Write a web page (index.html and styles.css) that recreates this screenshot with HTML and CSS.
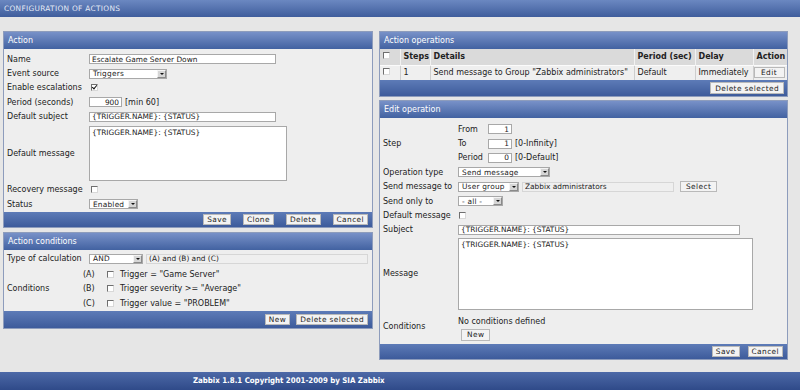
FILE: index.html
```html
<!DOCTYPE html>
<html lang="en">
<head>
    <meta charset="UTF-8">
    <title>Configuration of actions</title>
    <link rel="stylesheet" href="styles.css">
</head>
<body>
    <div class="title-bar">CONFIGURATION OF ACTIONS</div>

    <div class="main">
        <!-- Left column -->
        <div class="col-left">
            <div class="panel">
                <div class="panel-head">Action</div>
                <div class="form form-left">
                    <div class="row"><span class="lbl">Name</span><input class="inp w-name" value="Escalate Game Server Down"></div>
                    <div class="row"><span class="lbl">Event source</span><span class="sel w-event">Triggers<i class="arr"></i></span></div>
                    <div class="row"><span class="lbl">Enable escalations</span><span class="cb checked"></span></div>
                    <div class="row"><span class="lbl">Period (seconds)</span><input class="inp num w-period" value="900"><span class="hint">[min 60]</span></div>
                    <div class="row"><span class="lbl">Default subject</span><input class="inp w-name" value="{TRIGGER.NAME}: {STATUS}"></div>
                    <div class="row tall"><span class="lbl">Default message</span><textarea class="txt w-msg">{TRIGGER.NAME}: {STATUS}</textarea></div>
                    <div class="row"><span class="lbl">Recovery message</span><span class="cb"></span></div>
                    <div class="row"><span class="lbl">Status</span><span class="sel w-status">Enabled<i class="arr"></i></span></div>
                </div>
                <div class="panel-foot">
                    <button class="btn">Save</button>
                    <button class="btn">Clone</button>
                    <button class="btn">Delete</button>
                    <button class="btn">Cancel</button>
                </div>
            </div>

            <div class="panel">
                <div class="panel-head">Action conditions</div>
                <div class="form form-left form-conds">
                    <div class="row calc"><span class="lbl">Type of calculation</span><span class="sel w-calc">AND<i class="arr"></i></span><input class="inp ro w-formula" value="(A) and (B) and (C)" readonly></div>
                    <div class="row conds">
                        <span class="lbl">Conditions</span>
                        <div class="cond-list">
                            <div class="cond"><span class="key">(A)</span><span class="cb"></span><span class="cond-text">Trigger = "Game Server"</span></div>
                            <div class="cond"><span class="key">(B)</span><span class="cb"></span><span class="cond-text">Trigger severity &gt;= "Average"</span></div>
                            <div class="cond"><span class="key">(C)</span><span class="cb"></span><span class="cond-text">Trigger value = "PROBLEM"</span></div>
                        </div>
                    </div>
                </div>
                <div class="panel-foot foot-tight">
                    <button class="btn">New</button>
                    <button class="btn">Delete selected</button>
                </div>
            </div>
        </div>

        <!-- Right column -->
        <div class="col-right">
            <div class="panel">
                <div class="panel-head">Action operations</div>
                <table class="ops">
                    <colgroup>
                        <col style="width:20px"><col style="width:30px"><col style="width:204px"><col style="width:61px"><col style="width:58px"><col style="width:34px">
                    </colgroup>
                    <thead>
                        <tr>
                            <th><span class="cb"></span></th>
                            <th>Steps</th>
                            <th>Details</th>
                            <th>Period (sec)</th>
                            <th>Delay</th>
                            <th>Action</th>
                        </tr>
                    </thead>
                    <tbody>
                        <tr>
                            <td><span class="cb"></span></td>
                            <td>1</td>
                            <td>Send message to Group "Zabbix administrators"</td>
                            <td>Default</td>
                            <td>Immediately</td>
                            <td><button class="btn btn-edit">Edit</button></td>
                        </tr>
                    </tbody>
                </table>
                <div class="panel-foot foot-ops">
                    <button class="btn">Delete selected</button>
                </div>
            </div>

            <div class="panel">
                <div class="panel-head">Edit operation</div>
                <div class="form form-right">
                    <div class="row step">
                        <span class="lbl">Step</span>
                        <div class="step-list">
                            <div class="step-row"><span class="sub">From</span><input class="inp num w-step" value="1"></div>
                            <div class="step-row"><span class="sub">To</span><input class="inp num w-step" value="1"><span class="hint">[0-Infinity]</span></div>
                            <div class="step-row"><span class="sub">Period</span><input class="inp num w-step" value="0"><span class="hint">[0-Default]</span></div>
                        </div>
                    </div>
                    <div class="row"><span class="lbl">Operation type</span><span class="sel w-optype">Send message<i class="arr"></i></span></div>
                    <div class="row"><span class="lbl">Send message to</span><span class="sel w-sendto">User group<i class="arr"></i></span><input class="inp ro w-group" value="Zabbix administrators" readonly><button class="btn btn-select">Select</button></div>
                    <div class="row"><span class="lbl">Send only to</span><span class="sel w-only">- all -<i class="arr"></i></span></div>
                    <div class="row"><span class="lbl">Default message</span><span class="cb"></span></div>
                    <div class="row"><span class="lbl">Subject</span><input class="inp w-subject" value="{TRIGGER.NAME}: {STATUS}"></div>
                    <div class="row tall-msg"><span class="lbl">Message</span><textarea class="txt w-message">{TRIGGER.NAME}: {STATUS}</textarea></div>
                    <div class="row op-conds">
                        <span class="lbl">Conditions</span>
                        <div class="op-cond-box">
                            <span>No conditions defined</span>
                            <button class="btn">New</button>
                        </div>
                    </div>
                </div>
                <div class="panel-foot foot-edit">
                    <button class="btn">Save</button>
                    <button class="btn">Cancel</button>
                </div>
            </div>
        </div>
    </div>

    <div class="footer">Zabbix 1.8.1 Copyright 2001-2009 by SIA Zabbix</div>
</body>
</html>
```

FILE: styles.css
```css
/* Colours used across the page */
:root {
    --page-bg: #e6e6e6;
    --panel-bg: #eeeeee;
    --panel-border: #8d9cbc;
    --head-top: #7891c8;
    --head-bottom: #4262a1;
    --bar-top: #5d7bb7;
    --bar-bottom: #3d5b9b;
    --text: #222;
    --field-border: #a8a8a8;
}

* {
    margin: 0;
    padding: 0;
    box-sizing: border-box;
}

body {
    font-family: "DejaVu Sans", Verdana, sans-serif;
    font-size: 8px;
    color: var(--text);
    background: var(--page-bg);
    height: 390px;
    display: flex;
    flex-direction: column;
    overflow: hidden;
}

/* Top title bar */
.title-bar {
    height: 17px;
    line-height: 17px;
    padding-left: 4px;
    font-size: 7.4px;
    letter-spacing: 0.3px;
    color: #e4eaf6;
    background: linear-gradient(#6b88c1, #3f5d9c);
}

/* Two columns */
.main {
    flex: 1;
    display: flex;
    align-items: flex-start;
    gap: 6px;
    padding: 14px 0 0 3px;
}

.col-left {
    width: 370px;
    display: flex;
    flex-direction: column;
    gap: 4px;
}

.col-right {
    width: 409px;
    display: flex;
    flex-direction: column;
    gap: 3px;
}

/* Panels */
.panel {
    border: 1px solid var(--panel-border);
    background: var(--panel-bg);
}

.panel-head {
    height: 17px;
    line-height: 17px;
    padding-left: 4px;
    color: #fff;
    background: linear-gradient(var(--head-top), var(--head-bottom));
}

.panel-foot {
    height: 15px;
    display: flex;
    justify-content: flex-end;
    align-items: center;
    gap: 12px;
    padding-right: 4px;
    background: linear-gradient(var(--bar-top), var(--bar-bottom));
}

.foot-tight {
    height: 17px;
    gap: 6px;
}

.foot-ops {
    height: 16px;
    padding-right: 3px;
}

.foot-edit {
    gap: 8px;
}

/* Buttons */
.btn {
    font-family: inherit;
    font-size: 7.4px;
    letter-spacing: 0.4px;
    height: 11px;
    line-height: 9px;
    padding: 0 3px;
    color: #222;
    background: #f3f3f3;
    border: 1px solid #b9b9b9;
}

.foot-ops .btn {
    height: 12px;
    padding: 0 4px;
}

/* Form rows */
.form {
    padding: 3px 0 1px 3px;
}

.form-conds {
    padding-top: 1px;
}

.form-right {
    padding-top: 4px;
}

.row {
    display: flex;
    align-items: center;
    height: 14.4px;
    white-space: nowrap;
}

.form-left .lbl {
    width: 82px;
    flex: none;
}

.form-right .lbl {
    width: 75px;
    flex: none;
}

.row.tall {
    height: 58.6px;
}

.row.calc {
    height: 14.5px;
}

.row.conds {
    height: 44px;
    padding-top: 2px;
}

/* Fields */
.inp {
    font-family: inherit;
    font-size: 7.4px;
    height: 10px;
    line-height: 8px;
    padding: 0 2px;
    color: var(--text);
    background: #fff;
    border: 1px solid var(--field-border);
    outline: none;
}

.inp.num {
    text-align: right;
}

.inp.ro {
    background: #efefef;
    border-color: #d6d6d6;
}

.txt {
    font-family: inherit;
    font-size: 7.4px;
    line-height: 9px;
    padding: 1px 2px;
    color: var(--text);
    background: #fff;
    border: 1px solid var(--field-border);
    resize: none;
    outline: none;
}

.sel {
    display: inline-flex;
    justify-content: space-between;
    align-items: center;
    height: 10px;
    padding-left: 3px;
    font-size: 7.4px;
    letter-spacing: 0.2px;
    background: #fff;
    border: 1px solid var(--field-border);
}

.sel .arr {
    position: relative;
    width: 9px;
    height: 8px;
    background: #d6d6d6;
    border: 1px solid;
    border-color: #f4f4f4 #8a8a8a #8a8a8a #f4f4f4;
}

/* small arrow drawn inside the select button */
.sel .arr::after {
    content: "";
    position: absolute;
    left: 2px;
    top: 2px;
    border-left: 2px solid transparent;
    border-right: 2px solid transparent;
    border-top: 2px solid #111;
}

.cb {
    display: inline-block;
    position: relative;
    width: 7px;
    height: 7px;
    background: #fff;
    border: 1px solid;
    border-color: #6f6f6f #d8d8d8 #d8d8d8 #6f6f6f;
}

.cb.checked::after {
    content: "";
    position: absolute;
    left: 1px;
    top: -1px;
    width: 2px;
    height: 4px;
    border-right: 1.4px solid #111;
    border-bottom: 1.4px solid #111;
    transform: rotate(40deg);
}

.hint {
    margin-left: 3px;
}

/* Widths taken from the reference */
.w-name { width: 187px; }
.w-event { width: 78px; }
.w-period { width: 33px; }
.w-msg { width: 198px; height: 55px; }
.w-status { width: 49px; }
.w-calc { width: 54px; }
.w-formula { width: 222px; margin-left: 3px; }
.w-step { width: 24px; }
.w-optype { width: 92px; }
.w-sendto { width: 61px; }
.w-group { width: 152px; margin-left: 3px; }
.w-only { width: 45px; }
.w-subject { width: 282px; }
.w-message { width: 295px; height: 72px; }

.form-left .row > .cb {
    margin-left: 2px;
}

.form-right .row > .cb {
    margin-left: 1px;
}

/* Action conditions list */
.cond-list {
    display: flex;
    flex-direction: column;
    margin-left: -6px;
}

.cond {
    display: flex;
    align-items: center;
    height: 14.5px;
}

.cond .key {
    width: 24px;
}

.cond-text {
    margin-left: 6px;
}

/* Operations table */
.ops {
    width: 100%;
    table-layout: fixed;
    border-collapse: collapse;
}

.ops th,
.ops td {
    text-align: left;
    padding: 0 3px;
    white-space: nowrap;
    overflow: hidden;
}

.ops th {
    height: 16px;
    font-weight: bold;
    background: #dadada;
    border-right: 1px solid #f2f2f2;
}

.ops td {
    height: 15px;
    background: #efefef;
    border-right: 1px solid #cdcdcd;
    border-top: 1px solid #fbfbfb;
}

.ops th:last-child,
.ops td:last-child {
    border-right: none;
}

.btn-edit {
    height: 11px;
    width: 31px;
    margin-left: -3px;
}

.btn-select {
    margin-left: 6px;
    padding: 0 5px;
}

/* Edit operation */
.row.step {
    height: 43.2px;
}

.step-list {
    display: flex;
    flex-direction: column;
}

.step-row {
    display: flex;
    align-items: center;
    height: 14.4px;
}

.step-row .sub {
    width: 30px;
}

.row.tall-msg {
    height: 73px;
}

.row.op-conds {
    height: 33px;
}

.op-cond-box {
    display: flex;
    flex-direction: column;
    align-items: flex-start;
    gap: 3px;
    padding-top: 4px;
}

.op-cond-box .btn {
    margin-left: 3px;
    height: 12px;
    padding: 0 5px;
}

/* Page footer */
.footer {
    height: 18px;
    line-height: 18px;
    padding-left: 193px;
    font-family: "DejaVu Sans Condensed", "DejaVu Sans", sans-serif;
    font-stretch: condensed;
    font-weight: bold;
    font-size: 7.8px;
    color: #fff;
    background: linear-gradient(#4d69a7, #2f4a89);
}
```
